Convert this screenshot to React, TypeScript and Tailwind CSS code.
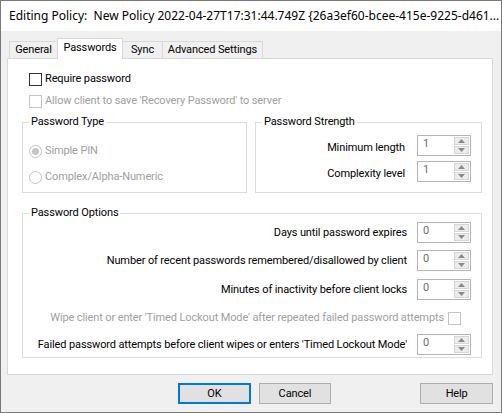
import React from "react";

const body = { fontFamily: 'Roboto, "Noto Sans", sans-serif' };
const title = { fontFamily: '"Noto Sans", "Open Sans", sans-serif' };

function Spin({ value }: { value: string }) {
  return (
    <div className="flex h-[21px] w-[54px] shrink-0 border border-[#b4b4b4] bg-white">
      <div className="flex-1 pl-[5px] pt-[1px] leading-[14px] text-[#6d6d6d]">{value}</div>
      <div className="flex w-[17px] flex-col gap-px p-px">
        <div className="flex flex-1 items-center justify-center border border-[#d6d6d6] bg-[#ececec]">
          <svg width="7" height="4" viewBox="0 0 7 4">
            <polygon points="0,4 7,4 3.5,0" fill="#8a8a8a" />
          </svg>
        </div>
        <div className="flex flex-1 items-center justify-center border border-[#d6d6d6] bg-[#ececec]">
          <svg width="7" height="4" viewBox="0 0 7 4">
            <polygon points="0,0 7,0 3.5,4" fill="#8a8a8a" />
          </svg>
        </div>
      </div>
    </div>
  );
}

function Check({ disabled }: { disabled?: boolean }) {
  return (
    <span
      className={
        "inline-block h-[13px] w-[13px] shrink-0 border bg-white " +
        (disabled ? "border-[#c4c4c4]" : "border-[#333333]")
      }
    />
  );
}

function Radio({ checked }: { checked?: boolean }) {
  return (
    <span className="flex h-[13px] w-[13px] shrink-0 items-center justify-center rounded-full border border-[#c4c4c4] bg-white">
      {checked && <span className="h-[7px] w-[7px] rounded-full bg-[#c4c4c4]" />}
    </span>
  );
}

function Group({ title, className, children }: { title: string; className: string; children: React.ReactNode }) {
  return (
    <div className={"relative border border-[#dcdcdc] " + className}>
      <span className="absolute -top-[9px] left-[6px] whitespace-nowrap bg-white px-[2px] leading-[16px] text-black">
        {title}
      </span>
      {children}
    </div>
  );
}

function Row({ label, value }: { label: string; value: string }) {
  return (
    <div className="flex h-[21px] items-center justify-end gap-[10px]">
      <span className="whitespace-nowrap leading-[16px] text-black">{label}</span>
      <Spin value={value} />
    </div>
  );
}

export default function App() {
  const tabs = [
    { name: "General", cls: "w-[48px] border-l border-t h-[17px] bg-[#f0f0f0]" },
    { name: "Passwords", cls: "w-[66px] border-l border-t border-r h-[21px] -mb-px bg-white relative z-10 pb-[2px]" },
    { name: "Sync", cls: "w-[40px] border-t border-r h-[17px] bg-[#f0f0f0]" },
    { name: "Advanced Settings", cls: "w-[100px] border-t border-r h-[17px] bg-[#f0f0f0]" },
  ];

  return (
    <div
      style={body}
      className="flex h-[413px] w-[502px] flex-col border border-[#7a7a7a] bg-[#f0f0f0] text-[11px] tracking-[-0.12px] text-black"
    >
      {/* Title bar */}
      <div className="flex h-[30px] items-center bg-white pl-[8px] pr-[11px]">
        <span style={title} className="flex-1 whitespace-pre text-[12px] leading-[16px] tracking-normal">
          Editing Policy:  New Policy 2022-04-27T17:31:44.749Z {"{"}26a3ef60-bcee-415e-9225-d461...
        </span>
        <svg width="11" height="11" viewBox="0 0 11 11">
          <line x1="0.5" y1="0.5" x2="10.5" y2="10.5" stroke="#111" strokeWidth="1" />
          <line x1="10.5" y1="0.5" x2="0.5" y2="10.5" stroke="#111" strokeWidth="1" />
        </svg>
      </div>

      {/* Body */}
      <div className="flex flex-1 flex-col pl-[6px] pr-[8px] pt-[7px]">
        <div className="flex h-[20px] items-end pl-[2px]">
          {tabs.map((t) => (
            <div
              key={t.name}
              className={"flex items-center justify-center whitespace-nowrap border-[#d9d9d9] leading-[16px] " + t.cls}
            >
              {t.name}
            </div>
          ))}
        </div>

        <div className="flex h-[317px] flex-col border border-[#d9d9d9] bg-white pt-[12px]">
          <div className="flex h-[16px] items-center gap-[3px] pl-[21px]">
            <Check />
            <span className="whitespace-nowrap leading-[16px]">Require password</span>
          </div>
          <div className="mt-[6px] flex h-[16px] items-center gap-[3px] pl-[21px]">
            <Check disabled />
            <span className="whitespace-nowrap leading-[16px] text-[#a0a0a0]">
              Allow client to save 'Recovery Password' to server
            </span>
          </div>

          <div className="mt-[13px] flex gap-[8px] pl-[14px] pr-[10px]">
            <Group title="Password Type" className="h-[71px] w-[225px]">
              <div className="flex flex-col gap-[10px] pl-[6px] pt-[20px]">
                <div className="flex h-[16px] items-center gap-[3px]">
                  <Radio checked />
                  <span className="whitespace-nowrap text-[#a0a0a0]">Simple PIN</span>
                </div>
                <div className="flex h-[16px] items-center gap-[3px]">
                  <Radio />
                  <span className="whitespace-nowrap text-[#a0a0a0]">Complex/Alpha-Numeric</span>
                </div>
              </div>
            </Group>
            <Group title="Password Strength" className="h-[71px] flex-1">
              <div className="flex flex-col gap-[5px] pr-[10px] pt-[12px]">
                <div className="flex h-[21px] items-center justify-end gap-[12px]">
                  <span className="whitespace-nowrap pt-[5px]">Minimum length</span>
                  <Spin value="1" />
                </div>
                <div className="flex h-[21px] items-center justify-end gap-[12px]">
                  <span className="whitespace-nowrap pt-[5px]">Complexity level</span>
                  <Spin value="1" />
                </div>
              </div>
            </Group>
          </div>

          <div className="mt-[20px] pl-[14px] pr-[10px]">
            <Group title="Password Options" className="h-[145px]">
              <div className="flex flex-col pr-[10px] pt-[8px]">
                <Row label="Days until password expires" value="0" />
                <div className="mt-[7px]">
                  <Row label="Number of recent passwords remembered/disallowed by client" value="0" />
                </div>
                <div className="mt-[8px]">
                  <Row label="Minutes of inactivity before client locks" value="0" />
                </div>
                <div className="mt-[8px] flex h-[21px] items-center justify-end gap-[4px] pr-[10px]">
                  <span className="whitespace-nowrap text-[#a0a0a0]">
                    Wipe client or enter 'Timed Lockout Mode' after repeated failed password attempts
                  </span>
                  <Check disabled />
                </div>
                <div className="mt-[5px]">
                  <Row label="Failed password attempts before client wipes or enters 'Timed Lockout Mode'" value="0" />
                </div>
              </div>
            </Group>
          </div>
        </div>

        {/* Buttons */}
        <div className="mt-[8px] flex h-[21px] pl-[171px]">
          <button className="h-[21px] w-[73px] border-2 border-[#0078d7] bg-[#e1e1e1] leading-[16px]">OK</button>
          <button className="ml-[8px] h-[21px] w-[73px] border border-[#adadad] bg-[#e1e1e1] leading-[16px]">Cancel</button>
          <button className="ml-[89px] h-[21px] w-[73px] border border-[#adadad] bg-[#e1e1e1] leading-[16px]">Help</button>
        </div>
      </div>
    </div>
  );
}
